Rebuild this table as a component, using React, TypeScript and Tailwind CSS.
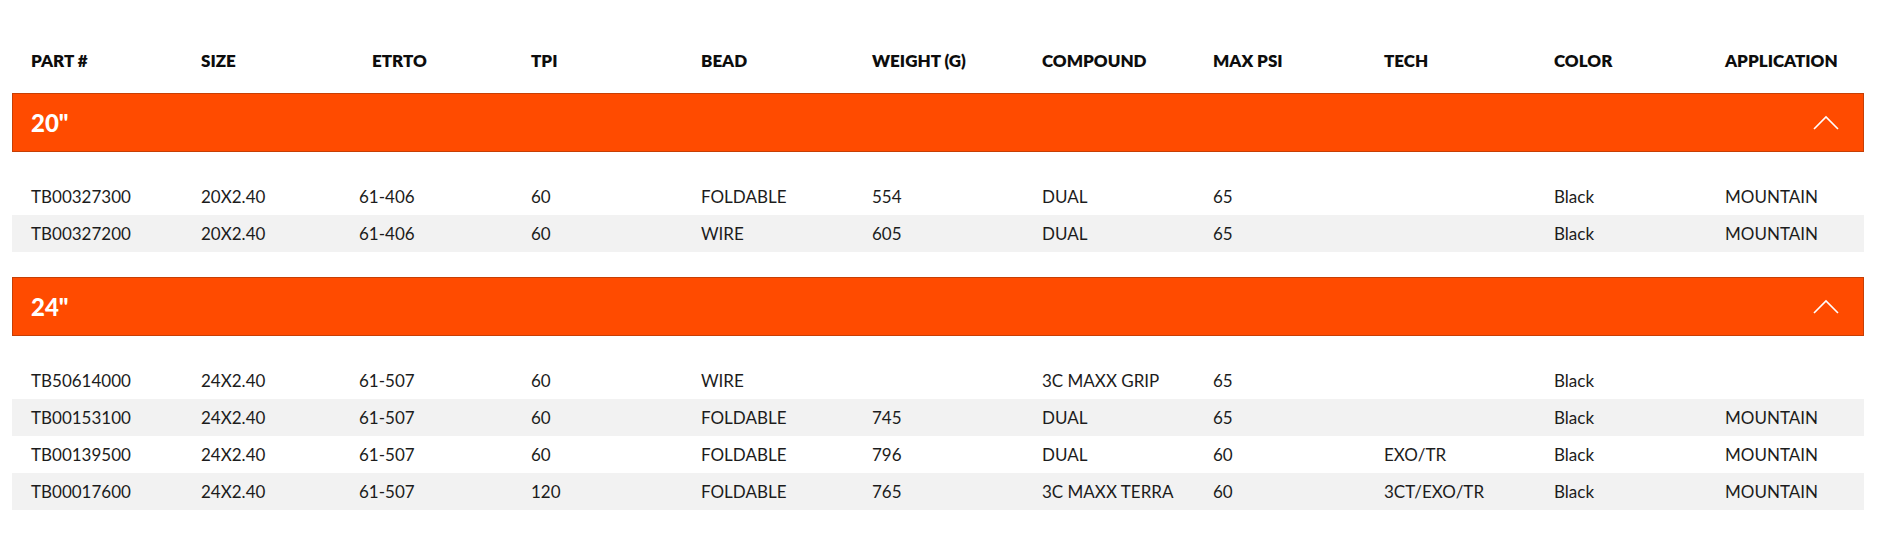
const columns = [
  'PART #',
  'SIZE',
  'ETRTO',
  'TPI',
  'BEAD',
  'WEIGHT (G)',
  'COMPOUND',
  'MAX PSI',
  'TECH',
  'COLOR',
  'APPLICATION',
]

type Tire = string[]

const groups: { label: string; rows: Tire[] }[] = [
  {
    label: '20"',
    rows: [
      ['TB00327300', '20X2.40', '61-406', '60', 'FOLDABLE', '554', 'DUAL', '65', '', 'Black', 'MOUNTAIN'],
      ['TB00327200', '20X2.40', '61-406', '60', 'WIRE', '605', 'DUAL', '65', '', 'Black', 'MOUNTAIN'],
    ],
  },
  {
    label: '24"',
    rows: [
      ['TB50614000', '24X2.40', '61-507', '60', 'WIRE', '', '3C MAXX GRIP', '65', '', 'Black', ''],
      ['TB00153100', '24X2.40', '61-507', '60', 'FOLDABLE', '745', 'DUAL', '65', '', 'Black', 'MOUNTAIN'],
      ['TB00139500', '24X2.40', '61-507', '60', 'FOLDABLE', '796', 'DUAL', '60', 'EXO/TR', 'Black', 'MOUNTAIN'],
      ['TB00017600', '24X2.40', '61-507', '120', 'FOLDABLE', '765', '3C MAXX TERRA', '60', '3CT/EXO/TR', 'Black', 'MOUNTAIN'],
    ],
  },
]

const grid =
  'grid grid-cols-[170px_158px_172px_170px_171px_170px_171px_171px_170px_171px_1fr] pl-[19px]'

const Chevron = () => (
  <svg width="26" height="15" viewBox="0 0 26 15" fill="none">
    <polyline points="1,14 13,2 25,14" stroke="white" strokeWidth="1.6" />
  </svg>
)

export default function App() {
  return (
    <div className="min-h-[535px] bg-white font-['Lato','Liberation_Sans',sans-serif] text-[17px]">
      <div className="ml-[12px] w-[1852px] pt-[41px]">
        <div className={`${grid} h-[40px] items-center font-extrabold text-[#0d0d0d]`}>
          {columns.map((c) => (
            <div key={c} className={c === 'ETRTO' ? 'pl-[13px]' : ''}>
              {c}
            </div>
          ))}
        </div>

        {groups.map((group) => (
          <div key={group.label} className="mt-[12px]">
            <div className="flex h-[59px] items-center justify-between border border-[#c63f05] bg-[#ff4b00] pl-[18px] pr-[24px]">
              <div className="text-[24px] font-black text-white">{group.label}</div>
              <Chevron />
            </div>
            <div className="pt-[26px] pb-[13px]">
              {group.rows.map((row, i) => (
                <div
                  key={row[0]}
                  className={`${grid} h-[37px] items-center text-[#1c1c1c] ${i % 2 === 1 ? 'bg-[#f2f2f2]' : ''}`}
                >
                  {row.map((cell, j) => (
                    <div key={j}>{cell}</div>
                  ))}
                </div>
              ))}
            </div>
          </div>
        ))}
      </div>
    </div>
  )
}
